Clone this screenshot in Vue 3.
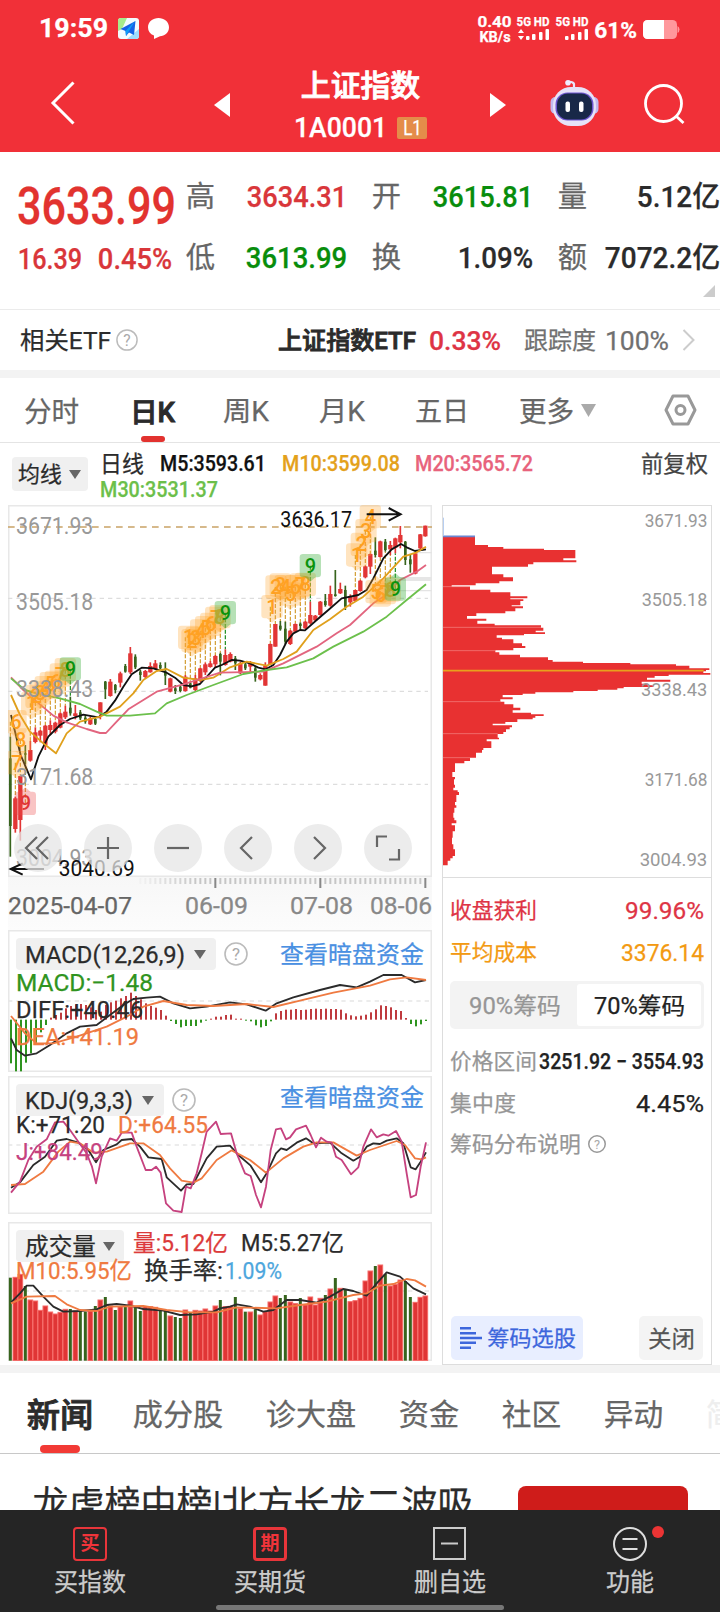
<script setup>
// Index detail page: quote header, daily K chart with sub-indicators,
// chip distribution on the right, news tabs and bottom toolbar.
import { h } from "vue"

// One line of text fitted to an exact ink width.
//   <Fit :w="98" :s="29">3634.31</Fit>
const Fit = (props, { slots }) =>
  h("svg", { class: "fit", width: props.w, height: props.s }, [
    h("text", {
      x: -0.04 * props.s,
      y: 0.86 * props.s,
      "font-size": props.s,
      textLength: props.w + 0.08 * props.s,
      lengthAdjust: "spacingAndGlyphs",
    }, slots.default()),
  ])
Fit.props = ["w", "s"]

const quotes = [
  [
    { k: "高", v: "3634.31", w: 98, c: "up" },
    { k: "开", v: "3615.81", w: 98, c: "down" },
    { k: "量", v: "5.12亿", w: 81, c: "" },
  ],
  [
    { k: "低", v: "3613.99", w: 99, c: "down" },
    { k: "换", v: "1.09%", w: 73, c: "" },
    { k: "额", v: "7072.2亿", w: 113, c: "" },
  ],
]

const newsTabs = [
  { t: "成分股", w: 88 }, { t: "诊大盘", w: 88 }, { t: "资金", w: 58 },
  { t: "社区", w: 57 }, { t: "异动", w: 57 }, { t: "简", w: 28, faint: true },
]

// All chart geometry is in thirds of a pixel; bars are 15 units apart.
const barX = i => 31 + 15 * i

// [direction, high, low, body top, body bottom]
const candles = [
  ["g",725,1085,790,993],["r",905,1013,910,1002],["r",843,1037,843,975],["g",750,808,775,779],
  ["r",738,800,765,797],["r",697,745,712,741],["r",705,742,707,722],["r",690,765,692,750],
  ["r",676,720,690,705],["r",680,715,683,710],["r",652,700,655,698],["r",632,672,650,667],
  ["g",605,662,638,655],["r",630,673,655,663],["g",645,675,652,670],["g",660,686,668,680],
  ["r",665,690,670,688],["g",665,690,672,686],["r",622,673,622,655],["g",558,612,560,583],
  ["r",552,605,560,603],["g",567,595,570,585],["r",530,577,535,563],["g",507,533,513,530],
  ["r",456,537,475,532],["g",478,522,485,517],["g",525,557,530,540],["r",525,550,528,546],
  ["r",502,533,513,532],["r",495,524,505,522],["g",502,523,510,520],["g",502,570,530,542],
  ["r",548,592,550,590],["g",570,597,580,588],["g",570,592,575,588],["r",540,590,545,588],
  ["g",560,580,565,578],["r",540,590,550,585],["r",518,562,520,558],["r",503,540,508,532],
  ["r",498,518,505,516],["r",480,517,483,508],["g",473,541,477,500],["r",463,512,480,510],
  ["r",472,502,477,500],["g",483,525,490,505],["r",500,537,505,535],["g",500,525,508,520],
  ["r",498,530,505,515],["g",513,560,520,548],["r",535,556,540,553],["r",502,572,512,572],
  ["r",445,510,447,508],["r",387,455,387,455],["g",378,407,392,403],["g",380,447,401,440],
  ["r",405,450,407,447],["r",385,412,387,410],["g",382,405,386,393],["r",378,402,380,400],
  ["r",320,388,360,385],["r",360,378,362,376],["r",318,362,320,360],["g",297,335,318,330],
  ["r",272,335,297,332],["g",225,305,298,303],["r",263,297,282,295],["g",272,345,285,335],
  ["r",298,335,303,322],["r",285,320,285,318],["r",255,290,257,288],["r",212,250,214,247],
  ["r",175,237,177,215],["g",127,187,167,180],["r",137,188,139,186],["g",132,170,140,165],
  ["r",138,180,150,163],["r",128,175,130,158],["r",93,160,120,142],["g",138,210,140,195],
  ["g",180,233,193,208],["r",173,238,175,236],["r",117,163,118,160],["r",92,125,92,124],
]

const averages = [
  { c: "#111", p: "33,660 62,780 93,853 115,785 145,725 180,690 210,672 250,659 295,667 320,650 345,617 370,575 395,538 425,518 460,520 500,533 525,548 550,570 575,574 600,567 625,540 645,518 665,510 695,495 720,497 750,505 775,518 797,523 820,510 840,480 860,440 880,415 900,405 915,406 950,375 985,345 1025,310 1075,300 1100,285 1120,250 1150,190 1175,163 1203,147 1220,157 1245,168 1278,163" },
  { c: "#e0a01c", p: "33,600 60,660 90,710 130,745 168,775 200,715 240,680 300,665 360,635 400,595 430,555 470,528 500,522 550,548 600,555 640,548 690,517 740,500 800,512 850,492 890,470 940,405 990,373 1040,335 1090,305 1150,250 1210,185 1250,172 1278,155" },
  { c: "#e2657f", p: "33,547 70,585 110,620 160,662 200,682 260,702 300,714 318,714 345,685 385,643 430,615 470,590 550,568 600,552 660,533 790,530 850,505 950,455 1010,415 1050,390 1120,325 1150,305 1200,255 1250,230 1278,210" },
  { c: "#6cc04c", p: "33,550 75,585 120,598 180,610 240,627 290,650 320,662 390,662 465,655 500,625 560,600 640,570 730,537 800,525 860,517 940,490 1000,455 1090,410 1160,365 1220,315 1278,268" },
]

// Nine-turn markers: [digit, box centre x, box centre y, bar index, below the bar]
const marks = [
  [6,48,680,0],[7,50,803,1],[8,62,735,2],[9,76,925,3,1],
  [1,95,625,4],[2,108,604,5],[3,121,594,6],[4,136,578,7],[5,151,566,8],[6,166,562,9],[7,181,540,10],[8,196,524,11],[9,211,522,12],
  [1,566,427,35],[2,576,437,36],[3,588,430,37],[4,602,408,38],[5,617,398,39],[6,632,388,40],[7,647,370,41],[8,660,365,42],[9,676,353,43],
  [1,816,335,52],[2,828,276,53],[3,841,270,54],[4,856,275,55],[5,871,297,56],[6,886,275,57],[7,901,270,58],[8,916,268,59],[9,931,212,60],
  [1,1070,180,69],[2,1084,148,70],[3,1098,107,71],[4,1111,65,72],
  [5,1128,290,73,1],[6,1141,300,74,1],[7,1156,293,75,1],[8,1171,285,76,1],[9,1186,282,77,1],
]
const markKind = m => (m[0] !== 9 ? "seq" : m[3] === 3 ? "low" : "top")
const markEnd = m => (m[4] ? candles[m[3]][2] : candles[m[3]][1])
const tail = m => {
  const [, x, y, , below] = m
  return below ? `${x - 16},${y - 34} ${x},${y - 48} ${x + 16},${y - 34}` : `${x - 16},${y + 34} ${x},${y + 48} ${x + 16},${y + 34}`
}

const priceLabels = [["3671.93", 118], ["3505.18", 346], ["3338.43", 607], ["3171.68", 870], ["3004.93", 1113]]

const ticks = Array.from({ length: 58 }, (_, k) => {
  const i = k + 26
  const major = [41, 62, 83].includes(i)
  return { x: barX(i), major, o: major ? 1 : Math.min(1, 0.1 + k * 0.08) }
})

// MACD histogram ends, zero line at 449
const macd = [
  580,604,604,578,550,522,487,465,443,435,428,415,408,403,402,405,412,420,425,405,397,392,385,378,368,378,388,400,
  408,413,420,437,453,462,472,468,468,468,458,452,446,440,440,435,434,446,446,452,454,466,472,468,454,430,423,419,
  419,417,420,419,417,416,417,416,417,417,419,430,436,439,437,434,427,418,406,408,412,420,423,444,462,469,463,453,
]
const diffLine = "33,505 50,540 75,557 110,550 150,525 200,490 240,470 290,465 330,435 370,405 400,387 440,383 480,380 520,400 570,415 620,410 690,397 740,403 797,422 830,400 880,382 960,360 1020,345 1070,352 1110,335 1150,315 1205,315 1245,337 1278,330"
const deaLine = "33,438 75,490 110,520 160,520 230,500 320,470 380,440 430,410 490,393 560,405 640,408 740,402 820,411 900,392 1000,368 1110,347 1170,328 1220,322 1278,330"

const jLine = "33,368 60,335 85,270 110,230 140,208 165,157 190,155 210,180 235,215 260,250 276,290 288,340 305,260 330,205 350,212 365,188 395,188 410,230 437,300 455,300 468,290 482,308 498,400 520,422 545,426 558,350 572,355 590,310 605,250 620,185 648,155 662,192 693,190 710,250 735,310 752,318 768,375 783,412 798,350 812,240 828,178 843,175 858,208 870,202 888,178 918,167 932,195 948,232 963,203 980,215 995,218 1008,260 1025,270 1053,313 1075,292 1090,230 1113,178 1130,202 1150,193 1165,197 1188,183 1205,215 1220,310 1232,382 1248,375 1262,290 1278,217"
const kLine = "33,353 60,337 100,285 135,260 170,212 200,207 235,218 265,240 288,277 310,240 350,223 365,210 395,207 420,230 445,262 485,267 500,322 543,362 560,343 580,342 620,265 650,230 690,227 715,255 752,287 783,337 800,310 828,250 843,235 860,240 890,218 918,205 940,220 990,218 1025,250 1060,272 1080,260 1100,230 1120,220 1140,222 1160,212 1190,205 1210,220 1232,292 1247,298 1262,275 1278,247"
const dLine = "33,345 75,342 130,305 175,245 210,215 240,220 280,248 320,245 390,220 430,220 480,255 510,295 545,332 580,338 605,325 650,270 695,241 750,270 798,308 850,265 910,230 950,217 1000,217 1070,257 1110,240 1190,213 1215,225 1245,265 1265,268 1278,262"

// Volume bar tops
const volume = [
  188,187,178,213,255,258,286,273,291,297,292,283,282,288,285,290,288,273,255,246,273,285,275,273,258,273,288,275,
  275,277,283,285,303,306,309,285,293,286,288,282,288,273,255,275,274,246,280,290,291,283,300,290,261,243,249,240,
  261,266,249,270,246,270,250,240,222,189,220,222,260,257,250,198,168,153,150,177,213,208,195,198,246,262,247,243,
]
const vol5 = "33,262 60,235 80,212 100,212 130,245 160,275 190,290 240,288 290,283 320,270 350,267 390,272 430,282 490,287 540,300 590,298 640,290 660,280 690,275 710,268 750,275 790,290 820,285 860,255 900,255 950,263 990,245 1030,222 1060,228 1100,242 1130,205 1160,172 1200,185 1240,220 1278,238"
const vol10 = "33,265 80,245 165,243 200,268 240,285 290,288 330,275 430,273 500,285 570,292 650,292 710,277 830,280 900,270 980,260 1060,240 1100,235 1140,212 1180,207 1220,192 1245,196 1278,215"

// Chip distribution: [top, right edge] steps going down
const chips = [
  [112,122],[137,161],[143,207],[148,329],[152,423],[177,387],[183,426],[189,297],[195,281],[202,173],[225,207],[234,236],
  [246,195],[252,124],[258,52],[262,107],[271,168],[279,228],[291,279],[297,228],[300,267],[305,258],[318,232],[321,266],
  [327,243],[336,213],[342,126],[350,98],[358,156],[364,129],[373,181],[378,320],[385,327],[394,304],[399,332],[404,269],
  [408,187],[415,203],[420,237],[432,263],[440,273],[446,237],[453,183],[459,195],[466,257],[474,341],[482,355],[487,446],
  [491,588],[495,725],[499,765],[507,825],[512,815],[516,807],[521,828],[526,703],[530,661],[535,638],[541,708],[547,622],
  [553,640],[558,657],[563,568],[567,549],[571,490],[575,417],[579,303],[583,265],[587,205],[594,235],[600,198],[607,210],
  [615,237],[625,258],[633,235],[640,290],[645,328],[650,303],[655,295],[660,249],[668,213],[673,175],[678,233],[684,226],
  [690,215],[698,207],[704,190],[715,194],[720,157],[726,171],[746,147],[752,143],[760,125],[775,107],[785,90],[792,62],
  [818,54],[833,62],[840,59],[856,62],[865,57],[873,70],[878,74],[887,66],[908,62],[918,66],[925,60],[940,57],[955,60],
  [963,66],[972,52],[978,62],[996,55],[1015,53],[1035,57],[1050,62],[1070,55],[1077,48],[1084,40],
]
const chipShape = (() => {
  const pts = ["23,112"]
  chips.forEach(([y, x], i) => {
    const next = i + 1 < chips.length ? chips[i + 1][0] : 1098
    pts.push(`${x},${y}`, `${x},${next}`)
  })
  return pts.concat("23,1098").join(" ")
})()
const chipLabels = [["3671.93", 631, 83, 186], ["3505.18", 622, 320, 195], ["3338.43", 620, 591, 197], ["3171.68", 631, 860, 186], ["3004.93", 616, 1100, 201]]
</script>

<template>
  <div class="page">
    <header class="top">
      <div class="status">
        <Fit :w="67" :s="26" class="bold">19:59</Fit>
        <svg class="st-map" width="21" height="21" viewBox="0 0 21 21">
          <rect width="21" height="21" rx="3" fill="#f2fbff" />
          <path d="M0 3a3 3 0 0 1 3-3h6L4 11 0 13z" fill="#a6ec8c" />
          <path d="M21 11v7a3 3 0 0 1-3 3H9z" fill="#9edcff" />
          <path d="M17.500 3 2.500 11l5 2 .5 5 3-3.500 5 2.500z" fill="#1463e8" />
          <path d="m17 3-9.500 10 .5 5z" fill="#0d9cf5" />
        </svg>
        <svg class="st-msg" width="21" height="21" viewBox="0 0 21 21">
          <path d="M10.500 0C16 0 21 3.700 21 9.200S16.500 18 12 18.300L6 21v-3.500C2 16 0 13 0 9.200 0 3.700 5 0 10.500 0z" fill="#fff" />
        </svg>
        <div class="speed bold">
          <Fit :w="33" :s="15">0.40</Fit>
          <Fit :w="30" :s="15">KB/s</Fit>
        </div>
        <div v-for="n in 2" :key="n" class="signal bold">
          <Fit :w="32" :s="12">5G HD</Fit>
          <svg width="33" height="12" viewBox="0 0 33 12" fill="#fff">
            <path v-if="n === 1" d="m4 0 3 4H1zM4 11l3-4H1z" />
            <rect x="9" y="7" width="3.500" height="4" rx="1" />
            <rect x="15" y="5" width="3.500" height="6" rx="1" />
            <rect x="22" y="3" width="3.500" height="8" rx="1" />
            <rect x="28.500" y="0" width="3.500" height="11" rx="1" />
          </svg>
        </div>
        <Fit :w="41" :s="22" class="bold pct">61%</Fit>
        <svg class="battery" width="37" height="19" viewBox="0 0 37 19">
          <rect width="34" height="19" rx="4.500" fill="#ff989c" />
          <path d="M34.500 6q2 1 2 3.500t-2 3.500z" fill="#ff989c" />
          <path d="M4.500 0H21v19H4.500A4.500 4.500 0 0 1 0 14.500v-10A4.500 4.500 0 0 1 4.500 0z" fill="#fff" />
        </svg>
      </div>
      <nav class="title-bar">
        <svg class="back" width="26" height="44" viewBox="0 0 26 44">
          <path d="M23.500 1.500 3 22l20.500 20.500" fill="none" stroke="#fff" stroke-width="3" />
        </svg>
        <svg class="prev" width="16" height="24"><path d="M16 0v24L0 12z" fill="#fff" /></svg>
        <div class="title">
          <Fit :w="117" :s="30" class="heavy">上证指数</Fit>
          <div class="code">
            <Fit :w="91" :s="28" class="mid">1A0001</Fit>
            <span class="level"><Fit :w="17" :s="20">L1</Fit></span>
          </div>
        </div>
        <svg class="next" width="16" height="24"><path d="M0 0v24l16-12z" fill="#fff" /></svg>
        <svg class="robot" width="49" height="46" viewBox="0 0 49 46">
          <path d="M24 8V4q-1-2.500-6-2" fill="none" stroke="#e9e4fb" stroke-width="2.200" />
          <circle cx="18" cy="2.800" r="2.800" fill="#efecff" />
          <rect x="0.500" y="17" width="10" height="17" rx="5" fill="#c3b9ee" />
          <rect x="38.500" y="17" width="10" height="17" rx="5" fill="#c3b9ee" />
          <rect x="3" y="7" width="43" height="39" rx="18" fill="#e6e2f8" />
          <rect x="5.500" y="12.500" width="38" height="28" rx="12" fill="#6c55cf" />
          <rect x="7" y="13.500" width="35" height="26" rx="11" fill="#182848" />
          <rect x="15.500" y="21.500" width="4.500" height="10.500" rx="2" fill="#fff" />
          <rect x="29" y="21.500" width="4.500" height="10.500" rx="2" fill="#fff" />
        </svg>
        <svg class="search" width="42" height="42" viewBox="0 0 42 42" fill="none" stroke="#fff" stroke-width="2.800">
          <circle cx="19.500" cy="20.500" r="18" /><path d="m32 33 7.500 7" />
        </svg>
      </nav>
    </header>

    <section class="quote">
      <div class="last up">
        <Fit :w="155" :s="51" class="mid">3633.99</Fit>
        <div class="delta mid"><Fit :w="62" :s="29">16.39</Fit><Fit :w="72" :s="29">0.45%</Fit></div>
      </div>
      <div class="grid">
        <div v-for="(row, r) in quotes" :key="r" class="grid-row">
          <div v-for="q in row" :key="q.k" class="cell">
            <Fit :w="27" :s="29" class="key">{{ q.k }}</Fit>
            <Fit :w="q.w" :s="29" class="mid" :class="q.c">{{ q.v }}</Fit>
          </div>
        </div>
      </div>
      <svg class="corner" width="12" height="12"><path d="M12 0v12H0z" fill="#ccc" /></svg>
    </section>

    <section class="etf">
      <Fit :w="89" :s="24">相关ETF</Fit>
      <svg class="help h1" width="22" height="22" viewBox="0 0 24 24"><circle cx="12" cy="12" r="11" /><text x="12" y="18">?</text></svg>
      <Fit :w="136" :s="24" class="name heavy">上证指数ETF</Fit>
      <Fit :w="70" :s="25" class="rate mid">0.33%</Fit>
      <Fit :w="70" :s="24" class="grey track">跟踪度</Fit>
      <Fit :w="62" :s="25" class="grey hundred">100%</Fit>
      <svg class="more" width="13" height="22"><path d="m1.500 1 10 10-10 10" fill="none" stroke="#ccc" stroke-width="2" /></svg>
    </section>

    <nav class="periods">
      <Fit :w="53" :s="28">分时</Fit>
      <div class="on"><Fit :w="43" :s="27" class="heavy">日K</Fit></div>
      <Fit :w="44" :s="27">周K</Fit>
      <Fit :w="44" :s="27">月K</Fit>
      <Fit :w="52" :s="27">五日</Fit>
      <Fit :w="53" :s="28">更多</Fit>
      <svg class="tri" width="15" height="13"><path d="M0 0h15L7.500 13z" fill="#aaa" /></svg>
      <svg class="gear" width="33" height="32" viewBox="0 0 33 32" fill="none" stroke="#999">
        <path d="M9 2h15l7 14-7 14H9L2 16z" stroke-width="3" stroke-linejoin="round" />
        <circle cx="16.500" cy="16" r="4.500" stroke-width="3" />
      </svg>
    </nav>

    <div class="legend">
      <button class="drop"><Fit :w="42" :s="22">均线</Fit><svg width="12" height="9"><path d="M0 0h12L6 9z" fill="#666" /></svg></button>
      <div class="mas">
        <div class="ma-line">
          <Fit :w="42" :s="23">日线</Fit>
          <Fit :w="104" :s="22" class="mid m5">M5:3593.61</Fit>
          <Fit :w="116" :s="22" class="mid m10">M10:3599.08</Fit>
          <Fit :w="116" :s="22" class="mid m20">M20:3565.72</Fit>
        </div>
        <div class="ma-line"><Fit :w="116" :s="22" class="mid m30">M30:3531.37</Fit></div>
      </div>
      <Fit :w="65" :s="23" class="adjust">前复权</Fit>
    </div>

    <main class="board">
      <div class="left">
        <div class="kline">
          <svg width="424" height="372" viewBox="24 30 1272 1116">
            <g class="dash">
              <path d="M24 310H1284M24 589H1284M24 868H1284" />
            </g>
            <path d="M24 96H1296" stroke="#c9a266" stroke-width="4" stroke-dasharray="20 16" />
            <path d="M1245 173H1296M1200 287H1296" stroke="#e4e4e4" stroke-width="4" />
            <path d="M1200 252H1296" stroke="#e6e6e6" stroke-width="12" />
            <g v-for="(m, i) in marks" :key="'d' + i">
              <path :d="`M${barX(m[3])} ${m[2]}V${markEnd(m)}`" :class="['stem', markKind(m)]" />
            </g>
            <g v-for="(c, i) in candles" :key="i" :fill="c[0] === 'r' ? '#e23535' : '#37641d'">
              <rect :x="barX(i) - 2.500" :y="c[1]" width="5" :height="c[2] - c[1]" />
              <rect :x="barX(i) - (c[0] === 'r' ? 6.500 : 4)" :y="c[3]" :width="c[0] === 'r' ? 13 : 8" :height="c[4] - c[3]" />
            </g>
            <polyline v-for="a in averages" :key="a.c" :points="a.p" :stroke="a.c" class="line" />
            <g v-for="(m, i) in marks" :key="'m' + i" :class="['mark', markKind(m)]">
              <rect :x="m[1] - 32" :y="m[2] - 35" width="64" height="70" rx="10" />
              <polygon :points="tail(m)" />
              <text :x="m[1]" :y="m[2] + 21">{{ m[0] }}</text>
            </g>
            <text v-for="l in priceLabels" :key="l[0]" x="48" :y="l[1]" class="axis-price" textLength="232" lengthAdjust="spacingAndGlyphs">{{ l[0] }}</text>
            <text x="841" y="96" class="extreme" textLength="215" lengthAdjust="spacingAndGlyphs">3636.17</text>
            <path d="M1100 58H1200M1166 39l36 19-36 19" class="arrow" />
            <text x="176" y="1142" class="extreme" textLength="228" lengthAdjust="spacingAndGlyphs">3040.69</text>
            <path d="M132 1122H32M68 1105l-36 17 36 17" class="arrow" />
          </svg>
          <div class="tools">
            <span class="tool"><svg viewBox="0 0 48 48"><path d="M23 13 12 24l11 11M34 13 23 24l11 11" /></svg></span>
            <span class="tool"><svg viewBox="0 0 48 48"><path d="M13 24h22M24 13v22" /></svg></span>
            <span class="tool"><svg viewBox="0 0 48 48"><path d="M13 24h22" /></svg></span>
            <span class="tool"><svg viewBox="0 0 48 48"><path d="M28 13 17 24l11 11" /></svg></span>
            <span class="tool"><svg viewBox="0 0 48 48"><path d="m20 13 11 11-11 11" /></svg></span>
            <span class="tool"><svg viewBox="0 0 48 48"><path d="M13 23V12.500h10M25 35.500h10V25" /></svg></span>
          </div>
        </div>

        <div class="dates">
          <svg width="424" height="12" viewBox="24 0 1272 36">
            <rect v-for="t in ticks" :key="t.x" :x="t.x - 3" y="3" width="6" :height="t.major ? 30 : 18" :fill="t.major ? '#888' : '#c6c6c6'" :opacity="t.o" />
          </svg>
          <div class="date-row">
            <Fit :w="122" :s="23" class="first">2025-04-07</Fit>
            <Fit :w="61" :s="23" class="d2">06-09</Fit>
            <Fit :w="61" :s="23" class="d3">07-08</Fit>
            <Fit :w="60" :s="23" class="d4">08-06</Fit>
          </div>
        </div>

        <div class="panel macd">
          <svg class="plot" width="424" height="142" viewBox="24 180 1272 426">
            <path d="M24 393H1290" class="faint" />
            <rect v-for="(v, i) in macd" :key="i" :x="barX(i) - 1" :y="Math.min(v, 449)" width="6" :height="Math.abs(v - 449)" :fill="v < 449 ? '#bf3a3e' : '#2f9420'" />
            <polyline :points="diffLine" stroke="#2b2b2b" class="line" />
            <polyline :points="deaLine" stroke="#ef7a41" class="line" />
          </svg>
          <div class="head">
            <button class="drop"><Fit :w="158" :s="24">MACD(12,26,9)</Fit><svg width="12" height="9"><path d="M0 0h12L6 9z" fill="#666" /></svg></button>
            <svg class="help" width="24" height="24" viewBox="0 0 24 24"><circle cx="12" cy="12" r="11" /><text x="12" y="18">?</text></svg>
            <Fit :w="142" :s="24" class="link">查看暗盘资金</Fit>
          </div>
          <div class="val green"><Fit :w="135" :s="24">MACD:−1.48</Fit></div>
          <div class="val"><Fit :w="125" :s="24">DIFF:+40.46</Fit></div>
          <div class="val orange"><Fit :w="121" :s="24">DEA:+41.19</Fit></div>
        </div>

        <div class="panel kdj">
          <svg class="plot" width="424" height="138" viewBox="24 18 1272 414">
            <path d="M24 225H1290" class="faint" />
            <polyline :points="kLine" stroke="#2b2b2b" class="line" />
            <polyline :points="dLine" stroke="#ef7a41" class="line" />
            <polyline :points="jLine" stroke="#c6427f" class="line" />
          </svg>
          <div class="head">
            <button class="drop"><Fit :w="106" :s="24">KDJ(9,3,3)</Fit><svg width="12" height="9"><path d="M0 0h12L6 9z" fill="#666" /></svg></button>
            <svg class="help" width="24" height="24" viewBox="0 0 24 24"><circle cx="12" cy="12" r="11" /><text x="12" y="18">?</text></svg>
            <Fit :w="142" :s="24" class="link">查看暗盘资金</Fit>
          </div>
          <div class="val"><Fit :w="87" :s="24">K:+71.20</Fit><Fit :w="88" :s="24" class="orange">D:+64.55</Fit></div>
          <div class="val pink"><Fit :w="85" :s="24">J:+84.49</Fit></div>
        </div>

        <div class="panel vol">
          <svg class="plot" width="424" height="139" viewBox="24 21 1272 417">
            <path d="M24 228H1290" class="faint" />
            <rect v-for="(v, i) in volume" :key="i" :class="candles[i][0] === 'r' ? 'vr' : 'vg'" :x="barX(i) - (candles[i][0] === 'r' ? 7 : 4.500)" :y="v" :width="candles[i][0] === 'r' ? 14 : 9" :height="437 - v" />
            <polyline :points="vol5" stroke="#2b2b2b" class="line" />
            <polyline :points="vol10" stroke="#ef7a41" class="line" />
          </svg>
          <div class="head">
            <button class="drop"><Fit :w="69" :s="24">成交量</Fit><svg width="12" height="9"><path d="M0 0h12L6 9z" fill="#666" /></svg></button>
            <Fit :w="93" :s="23" class="v-now">量:5.12亿</Fit>
            <Fit :w="101" :s="23" class="v-m5">M5:5.27亿</Fit>
          </div>
          <div class="val"><Fit :w="114" :s="24" class="orange">M10:5.95亿</Fit><Fit :w="77" :s="24" class="turn">换手率:</Fit><Fit :w="55" :s="24" class="blue">1.09%</Fit></div>
        </div>
      </div>

      <aside class="chip">
        <svg class="chip-plot" width="268" height="371" viewBox="26 20 804 1113">
          <polygon :points="chipShape" fill="#e83131" />
          <path d="M23 262H107M23 384H320M23 454H183M23 607H200M23 703H190M23 775H107" stroke="#f58a86" stroke-width="2" />
          <path d="M23 111H122" stroke="#6b86cf" stroke-width="5" />
          <path d="M27 55V110" stroke="#a9c4ee" stroke-width="3" />
          <path d="M23 514H808" stroke="#e8a01d" stroke-width="5" />
          <text v-for="l in chipLabels" :key="l[0]" :x="l[1]" :y="l[2]" :textLength="l[3] + 2" lengthAdjust="spacingAndGlyphs">{{ l[0] }}</text>
        </svg>
        <div class="info">
          <div class="row profit"><Fit :w="85" :s="22">收盘获利</Fit><Fit :w="77" :s="24">99.96%</Fit></div>
          <div class="row cost"><Fit :w="85" :s="22">平均成本</Fit><Fit :w="81" :s="24">3376.14</Fit></div>
          <div class="switch">
            <span><Fit :w="90" :s="23">90%筹码</Fit></span>
            <span class="active"><Fit :w="89" :s="23">70%筹码</Fit></span>
          </div>
          <div class="row range"><Fit :w="85" :s="22">价格区间</Fit><Fit :w="163" :s="22" class="num">3251.92 − 3554.93</Fit></div>
          <div class="row"><Fit :w="64" :s="22">集中度</Fit><Fit :w="66" :s="24" class="num">4.45%</Fit></div>
          <div class="row note"><Fit :w="129" :s="22">筹码分布说明</Fit><svg class="help" width="18" height="18" viewBox="0 0 24 24"><circle cx="12" cy="12" r="11" /><text x="12" y="18">?</text></svg></div>
        </div>
        <div class="actions">
          <button class="pick">
            <svg width="22" height="22" viewBox="0 0 22 22" fill="#3d66dc"><path d="M0 0h11v2.500H0zM0 5h16v2.500H0zM0 9.700h22v2.600H0zM0 14.500h16V17H0zM0 19.500h11V22H0z" /></svg>
            <Fit :w="87" :s="22">筹码选股</Fit>
          </button>
          <button class="close"><Fit :w="45" :s="23">关闭</Fit></button>
        </div>
      </aside>
    </main>

    <nav class="news-tabs">
      <div class="on"><Fit :w="64" :s="33" class="heavy">新闻</Fit></div>
      <Fit v-for="n in newsTabs" :key="n.t" :w="n.w" :s="30" :class="{ pale: n.faint }">{{ n.t }}</Fit>
    </nav>
    <article class="news">
      <Fit :w="438" :s="36">龙虎榜中榜|北方长龙二波吸</Fit>
      <div class="thumb"></div>
    </article>

    <footer class="dock">
      <div class="dock-items">
        <div class="item">
          <span class="ico box">买</span>
          <Fit :w="70" :s="25">买指数</Fit>
        </div>
        <div class="item">
          <span class="ico box thick">期</span>
          <Fit :w="70" :s="25">买期货</Fit>
        </div>
        <div class="item">
          <svg class="ico" viewBox="0 0 34 34" fill="none" stroke="#ccc" stroke-width="2"><rect x="1" y="1" width="31" height="31" /><path d="M8 16.500h17" /></svg>
          <Fit :w="70" :s="25">删自选</Fit>
        </div>
        <div class="item">
          <svg class="ico" viewBox="0 0 34 34" fill="none" stroke="#ddd" stroke-width="2"><circle cx="17" cy="17" r="16" /><path d="M9.500 12h15M9.500 22h15" /></svg>
          <i class="dot"></i>
          <Fit :w="46" :s="25">功能</Fit>
        </div>
      </div>
      <div class="home"></div>
    </footer>
  </div>
</template>

<style>
body { margin: 0; background: #fff; }
</style>

<style scoped>
.page {
  width: 720px;
  height: 1612px;
  display: flex;
  flex-direction: column;
  overflow: hidden;
  background: #fff;
  color: #2b2b2b;
  font-family: Roboto, "Noto Sans CJK SC", sans-serif;
}
.page > * { flex: none; box-sizing: border-box; }
svg { display: block; flex: none; }
.fit { overflow: visible; fill: currentColor; stroke: currentColor; stroke-width: 0.25; }
.bold { font-weight: 700; }
.mid { font-weight: 500; }
.heavy { font-weight: 500; stroke-width: 0.9; }
.up { color: #d9363a; }
.down { color: #088d0c; }
button { border: 0; padding: 0; font: inherit; color: inherit; }

/* header */
.top { height: 152px; background: #f13038; color: #fff; }
.status { display: flex; align-items: center; height: 56px; padding-left: 40px; }
.st-map { margin-left: 11px; }
.st-msg { margin-left: 9px; }
.speed { margin-left: 309px; display: flex; flex-direction: column; align-items: center; margin-top: 2px; }
.signal { margin-left: 6px; display: flex; flex-direction: column; gap: 1px; }
.speed + .signal { margin-left: 6px; }
.pct { margin-left: 6px; margin-top: 4px; }
.battery { margin-left: 7px; margin-top: 2px; }
.title-bar { display: flex; align-items: center; height: 96px; }
.back { margin-left: 50px; margin-top: -2px; }
.prev { margin-left: 138px; margin-top: 2px; }
.title { width: 260px; height: 96px; display: flex; flex-direction: column; align-items: center; padding-top: 14px; box-sizing: border-box; }
.code { display: flex; align-items: center; gap: 11px; margin: 13px 0 0 2px; }
.level { display: flex; justify-content: center; align-items: center; width: 30px; height: 22px; margin-top: 2px; background: #e48c4a; border-radius: 2px; }
.next { margin-top: 2px; }
.robot { margin-left: 44px; margin-top: -2px; }
.search { margin-left: 45px; }

/* quote */
.quote { display: flex; position: relative; height: 158px; border-bottom: 1px solid #ebebeb; }
.last { width: 168px; padding: 28px 0 0 19px; }
.last > .fit { color: #e2332f; }
.delta { display: flex; gap: 18px; margin-top: 13px; }
.grid { width: 533px; padding-top: 30px; }
.grid-row { display: grid; grid-template-columns: 159px 186px 187px; height: 61px; }
.cell { display: flex; justify-content: space-between; height: 29px; align-items: center; }
.cell + .cell { padding-left: 27px; }
.key { color: #666; }
.corner { position: absolute; right: 5px; bottom: 12px; }

.etf { display: flex; align-items: center; height: 68px; padding: 0 0 0 21px; border-bottom: 8px solid #f3f3f3; }
.help { fill: none; stroke: #bbb; stroke-width: 1.600; }
.help text { fill: #aaa; stroke: none; font-size: 17px; text-anchor: middle; }
.h1 { margin-left: 6px; }
.name { margin-left: 141px; }
.rate { margin-left: 15px; color: #de3445; }
.grey { color: #707070; }
.track { margin-left: 25px; }
.hundred { margin-left: 11px; }
.more { margin-left: 14px; }

/* period tabs */
.periods { display: flex; align-items: center; height: 65px; padding-left: 25px; border-bottom: 1px solid #e4e4e4; color: #666; }
.periods > .fit { margin-top: 3px; }
.periods .on { margin: 0 6px 0 53px; height: 64px; display: flex; flex-direction: column; align-items: center; justify-content: space-between; color: #2b2b2b; }
.periods .on .fit { margin-top: 21px; }
.periods .on::after { content: ""; width: 24px; height: 6px; border-radius: 3px; background: #e2322f; }
.periods > .fit + .fit { margin-left: 52px; }
.periods .on + .fit { margin-left: 44px; }
.tri { margin-left: 8px; }
.gear { margin-left: 68px; }

.legend { display: flex; height: 62px; }
.drop { display: flex; align-items: center; gap: 8px; background: #f0f0f0; border-radius: 4px; }
.legend .drop { width: 76px; height: 34px; margin: 14px 13px 0 12px; padding-left: 7px; box-sizing: border-box; }
.mas { width: 541px; padding-top: 7px; }
.ma-line { display: flex; align-items: center; height: 26px; }
.m5 { color: #111; margin-left: 18px; }
.m10 { color: #e4a11b; margin-left: 18px; }
.m20 { color: #e8637c; margin-left: 17px; }
.m30 { color: #6cbf4a; }
.adjust { color: #444; margin-top: 9px; }

/* charts */
.board { display: flex; height: 868px; padding-left: 8px; border-bottom: 8px solid #f3f3f3; }
.left { width: 424px; margin-right: 10px; }
.kline { position: relative; height: 372px; box-shadow: inset 0 0 0 1.500px #e8e8e8; }
.dash { stroke: #ddd; stroke-width: 4; stroke-dasharray: 13 12; }
.faint { stroke: #e6e6e6; stroke-width: 4; stroke-dasharray: 13 12; }
.line { fill: none; stroke-width: 5.500; stroke-linejoin: round; }
.axis-price { font-size: 70px; fill: #999; }
.extreme { font-size: 68px; fill: #111; }
.arrow { fill: none; stroke: #111; stroke-width: 6; }
.stem { stroke-width: 3.500; stroke-dasharray: 12 5; stroke: #d19a2c; }
.stem.top { stroke: #178a1b; }
.mark { text-anchor: middle; font-size: 60px; font-weight: 500; }
.mark.seq { fill: rgba(255, 165, 45, 0.3); }
.mark.seq text { fill: #ffa01e; }
.mark.top { fill: rgba(72, 180, 72, 0.4); }
.mark.top text { fill: #0a930d; }
.mark.low { fill: rgba(235, 70, 70, 0.32); }
.mark.low text { fill: #e03636; }
.tools { position: absolute; left: 6px; bottom: 5px; display: flex; gap: 22px; }
.tool { width: 48px; height: 48px; border-radius: 50%; background: rgba(230, 230, 230, 0.75); }
.tool svg { fill: none; stroke: #666; stroke-width: 2.200; }

.dates { height: 53px; background: linear-gradient(#f7f7f7, #fcfcfc); }
.date-row { display: flex; height: 32px; align-items: center; color: #888; padding-left: 1px; }
.first { color: #666; }
.d2 { margin-left: 55px; }
.d3 { margin-left: 44px; }
.d4 { margin-left: 19px; }

.panel { position: relative; box-shadow: inset 0 0 0 1.500px #e8e8e8; box-sizing: border-box; padding-left: 8px; }
.plot { position: absolute; left: 0; top: 0; }
.head, .val { position: relative; display: flex; align-items: center; }
.head { height: 32px; }
.head .drop { height: 32px; padding: 0 10px; gap: 10px; }
.head .help { margin-left: 8px; }
.link { color: #4a90e2; margin-left: auto; margin-right: 9px; }
.val { height: 27px; padding-left: 1px; }
.macd { height: 142px; padding-top: 8px; }
.macd .head { margin-bottom: -2px; }
.kdj { height: 138px; padding-top: 8px; margin-top: 4px; }
.kdj .link { margin-top: -6px; }
.kdj .head { margin-bottom: -6px; }
.kdj .orange { margin-left: 15px; }
.vol { height: 139px; padding-top: 8px; margin-top: 8px; }
.vol .head { margin-bottom: -6px; }
.vol .drop { gap: 8px; padding-right: 9px; }
.v-now { color: #dc3a3a; margin: -7px 0 0 10px; }
.v-m5 { margin: -7px 0 0 15px; }
.turn { margin-left: 14px; }
.green { color: #2f9420; }
.orange { color: #ef7a41; }
.pink { color: #c6427f; }
.blue { color: #4da6dd; margin-left: 4px; }
.vr { fill: #e03535; stroke: #f56b68; stroke-width: 3; }
.vg { fill: #37641d; }

/* chip distribution */
.chip { width: 270px; height: 860px; box-sizing: border-box; border: 1px solid #ddd; display: flex; flex-direction: column; }
.chip-plot { border-bottom: 1px solid #ddd; }
.chip-plot text { font-size: 57px; fill: #999; }
.info { padding: 11px 8px 0 8px; color: #969696; }
.row { display: flex; justify-content: space-between; align-items: center; height: 42px; }
.profit { color: #de3445; }
.cost { color: #f39a12; }
.num { color: #222; }
.range .num { font-weight: 500; }
.switch { display: flex; width: 254px; height: 48px; margin: 8px 0 11px -1px; padding: 3px; box-sizing: border-box; background: #f3f3f3; border-radius: 5px; }
.switch span { flex: 1; display: flex; align-items: center; justify-content: center; border-radius: 3px; }
.switch .active { background: #fff; color: #222; }
.note { justify-content: flex-start; gap: 8px; height: 40px; }
.note .help { stroke: #999; stroke-width: 2; }
.actions { display: flex; justify-content: space-between; margin-top: auto; padding: 0 8px 4px 8px; }
.actions button { height: 44px; border-radius: 5px; display: flex; align-items: center; justify-content: center; }
.pick { width: 132px; gap: 6px; background: #e8eeff; color: #3d66dc; }
.close { width: 64px; background: #f4f4f4; color: #555; }

/* news */
.news-tabs { display: flex; align-items: center; height: 81px; padding-left: 28px; border-bottom: 1px solid #c8c8c8; color: #666; }
.news-tabs .on { height: 80px; width: 64px; margin-right: 42px; display: flex; flex-direction: column; align-items: center; justify-content: space-between; color: #2b2b2b; }
.news-tabs .on .fit { margin-top: 26px; }
.news-tabs .on::after { content: ""; width: 40px; height: 8px; border-radius: 4px; background: #f23a35; }
.news-tabs > .fit { margin-top: 2px; }
.news-tabs > .fit + .fit { margin-left: 45px; }
.news-tabs > .pale { color: #eee; }
.news { display: flex; justify-content: space-between; height: 56px; padding: 32px 32px 0 34px; overflow: hidden; }
.thumb { width: 170px; height: 110px; border-radius: 8px; background: #cf1c1a; flex: none; }

/* bottom bar */
.dock { height: 102px; background: #252525; color: #ccc; display: flex; flex-direction: column; align-items: center; }
.dock-items { display: flex; width: 720px; height: 95px; }
.item { flex: 1; position: relative; display: flex; flex-direction: column; align-items: center; padding-top: 17px; }
.ico { width: 34px; height: 34px; box-sizing: border-box; margin-bottom: 8px; }
.box { border: 2px solid #e8353a; border-radius: 4px; color: #f0343a; font-size: 19px; line-height: 29px; text-align: center; font-weight: 700; }
.thick { border-width: 3px; line-height: 27px; }
.dot { position: absolute; left: 112px; top: 16px; width: 12px; height: 12px; border-radius: 50%; background: #ec3434; }
.home { width: 288px; height: 5px; border-radius: 3px; background: #777; }
</style>
